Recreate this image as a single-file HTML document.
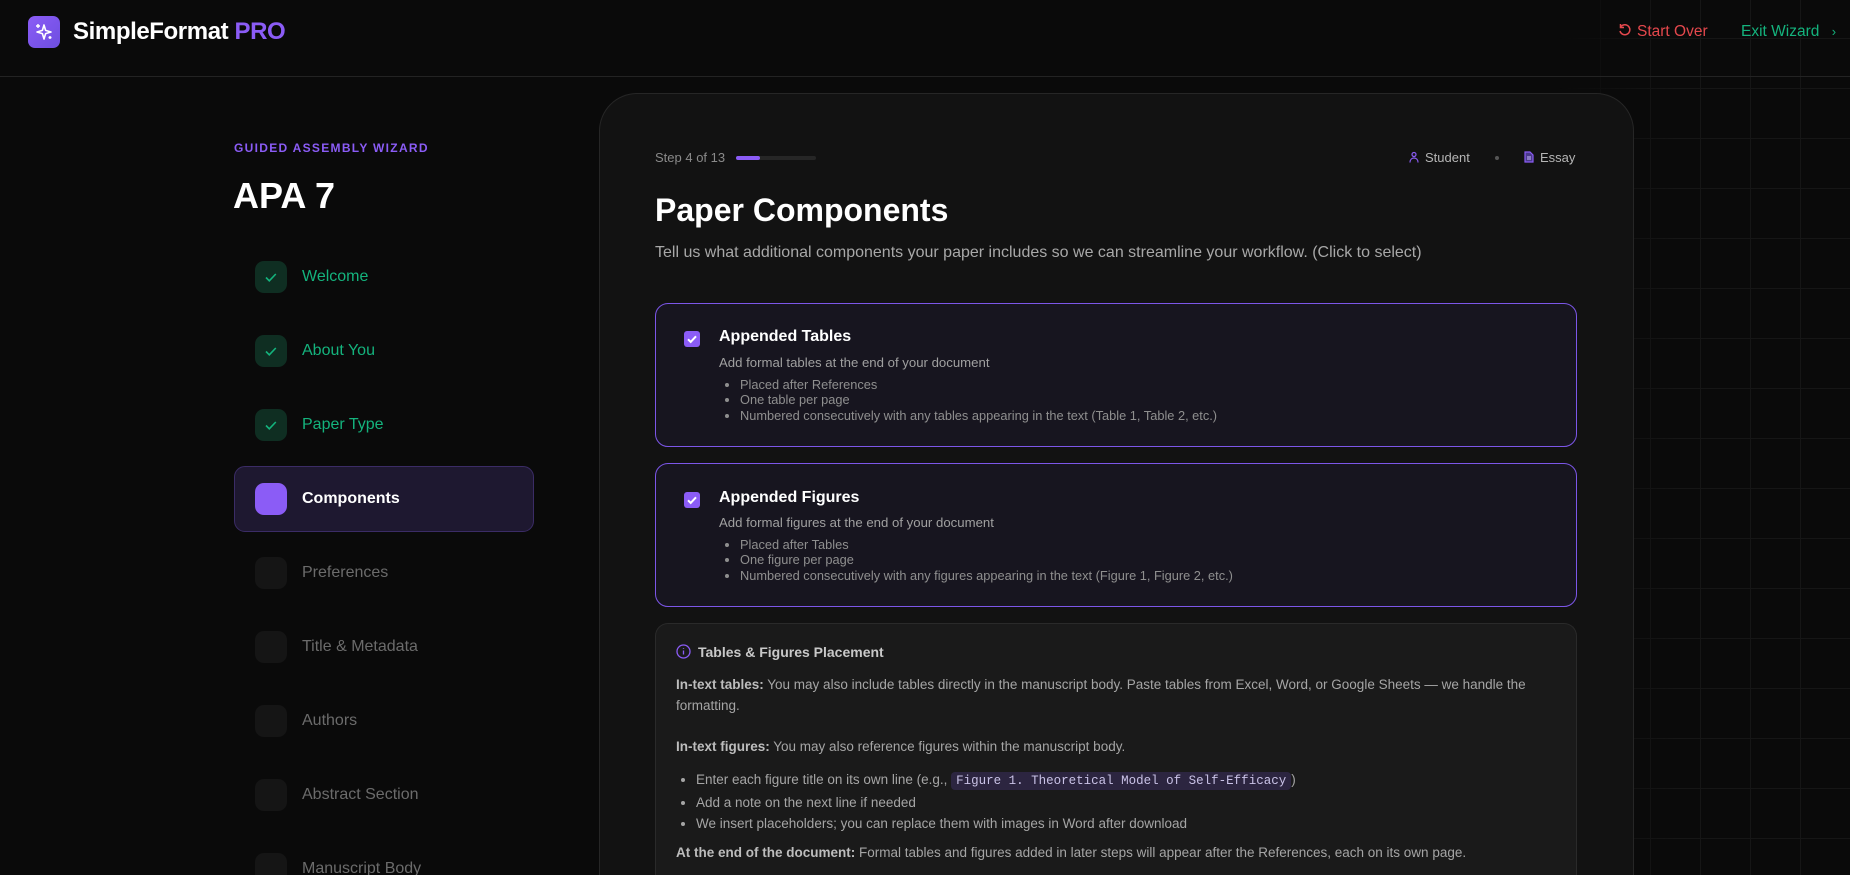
<!DOCTYPE html>
<html><head><meta charset="utf-8"><style>
*{box-sizing:border-box;margin:0;padding:0}
html,body{width:1850px;height:875px;overflow:hidden;background:#0a0a0a;font-family:"Liberation Sans",Arial,sans-serif;color:#fff}
body{position:relative}
.abs{position:absolute}
.grid{position:absolute;left:1560px;top:0;width:290px;height:875px;background-image:linear-gradient(#161616 1px,transparent 1px),linear-gradient(90deg,#161616 1px,transparent 1px);background-size:50px 50px;background-position:-10px -12px;-webkit-mask-image:linear-gradient(90deg,transparent,#000 40%);}
.hdr{position:absolute;left:0;top:0;width:1850px;height:77px;border-bottom:1px solid #232323}
.step{position:absolute;left:234px;width:300px;height:38px}
.step .ic{position:absolute;left:21px;top:17px;width:32px;height:32px;border-radius:9px;background:#151515}
.step .t{position:absolute;left:68px;top:24px;font-size:16px;color:#6b6b6b}
.step.done .ic{background:#0f2e22}
.step.done .t{color:#14b37d}
.card{position:absolute;left:655px;width:922px;border:1px solid #7c56e8;border-radius:13px;background:#17151f}
.card .cb{position:absolute;left:28px;width:16px;height:16px;border-radius:3px;background:#8b5cf6}
.card h3{position:absolute;left:63px;font-size:16px;font-weight:bold;color:#fff}
.card .d{position:absolute;left:63px;font-size:13.2px;color:#a0a0a0}
.card ul{position:absolute;left:84px;font-size:12.8px;line-height:15.3px;color:#8f8f8f;list-style:disc}
.info{position:absolute;left:655px;top:623px;width:922px;height:252px;border:1px solid #2a2a2a;border-bottom:none;border-radius:13px 13px 0 0;background:#1a1a1a;font-size:13.5px;color:#a5a5a5}
.info b{color:#bdbdbd}
.info .p{position:absolute;left:20px}
code{font-family:"Liberation Mono",monospace;font-size:12.5px;background:#2c2540;color:#c9c2e6;padding:2px 5px;border-radius:4px}
</style></head><body>
<div class="grid"></div>
<div class="hdr">
  <div class="abs" style="left:28px;top:16px;width:32px;height:32px;border-radius:7px;background:linear-gradient(135deg,#8b5cf6,#6d4ee0)">
    <svg width="32" height="32" viewBox="0 0 32 32"><path d="M16 9 L17.6 14.4 L23 16 L17.6 17.6 L16 23 L14.4 17.6 L9 16 L14.4 14.4Z" fill="none" stroke="#fff" stroke-width="1.6" stroke-linejoin="round"/><path d="M10 8v4M8 10h4M22 20v3M20.5 21.5h3" stroke="#fff" stroke-width="1.4"/></svg>
  </div>
  <div class="abs" style="left:73px;top:18px;font-size:24px;font-weight:bold;letter-spacing:-0.4px">SimpleFormat <span style="color:#8b5cf6">PRO</span></div>
  <div class="abs" style="left:1618px;top:23px;font-size:15.5px;color:#e5484d">
    <svg width="14" height="14" viewBox="0 0 14 14" style="vertical-align:-1px;margin-right:5px"><path d="M3 3.5A5 5 0 1 1 2 8" fill="none" stroke="#e5484d" stroke-width="1.5"/><path d="M2.5 1v3.5h3.5" fill="none" stroke="#e5484d" stroke-width="1.5"/></svg>Start Over</div>
  <div class="abs" style="left:1741px;top:23px;font-size:15.5px;color:#14b37d">Exit Wizard <span style="margin-left:8px;font-size:13px">›</span></div>
</div>

<div class="abs" style="left:234px;top:141px;font-size:12px;letter-spacing:1.3px;color:#8b5cf6;font-weight:bold">GUIDED ASSEMBLY WIZARD</div>
<div class="abs" style="left:233px;top:175px;font-size:36px;font-weight:bold">APA 7</div>

<div class="step done" style="top:244px"><div class="ic"><svg width="32" height="32"><path d="M11 16.5l3.3 3.3 6.5-6.8" fill="none" stroke="#14b37d" stroke-width="1.6"/></svg></div><div class="t">Welcome</div></div>
<div class="step done" style="top:318px"><div class="ic"><svg width="32" height="32"><path d="M11 16.5l3.3 3.3 6.5-6.8" fill="none" stroke="#14b37d" stroke-width="1.6"/></svg></div><div class="t">About You</div></div>
<div class="step done" style="top:392px"><div class="ic"><svg width="32" height="32"><path d="M11 16.5l3.3 3.3 6.5-6.8" fill="none" stroke="#14b37d" stroke-width="1.6"/></svg></div><div class="t">Paper Type</div></div>
<div class="step" style="top:466px;height:66px;background:#1e1830;border:1px solid #3b2c66;border-radius:11px"><div class="ic" style="left:20px;top:16px;background:#8b5cf6"></div><div class="t" style="top:23px;left:67px;color:#fff;font-weight:bold">Components</div></div>
<div class="step" style="top:540px"><div class="ic"></div><div class="t">Preferences</div></div>
<div class="step" style="top:614px"><div class="ic"></div><div class="t">Title &amp; Metadata</div></div>
<div class="step" style="top:688px"><div class="ic"></div><div class="t">Authors</div></div>
<div class="step" style="top:762px"><div class="ic"></div><div class="t">Abstract Section</div></div>
<div class="step" style="top:836px"><div class="ic"></div><div class="t">Manuscript Body</div></div>

<div class="abs" style="left:599px;top:93px;width:1035px;height:782px;border:1px solid #262626;border-bottom:none;border-radius:38px 38px 0 0;background:#121212"></div>

<div class="abs" style="left:655px;top:150px;font-size:13px;color:#8a8a8a">Step 4 of 13</div>
<div class="abs" style="left:736px;top:156px;width:80px;height:4px;border-radius:2px;background:#262626"><div style="width:24px;height:4px;border-radius:2px;background:#8b5cf6"></div></div>
<div class="abs" style="left:1409px;top:150px;font-size:13px;color:#b5b5b5">
  <svg width="10" height="12" viewBox="0 0 10 12" style="vertical-align:-1px;margin-right:6px"><circle cx="5" cy="3.5" r="2" fill="none" stroke="#8b5cf6" stroke-width="1.2"/><path d="M1 11.5c0-3 1.8-4.5 4-4.5s4 1.5 4 4.5" fill="none" stroke="#8b5cf6" stroke-width="1.2"/></svg>Student</div>
<div class="abs" style="left:1495px;top:156px;width:4px;height:4px;border-radius:2px;background:#555"></div>
<div class="abs" style="left:1524px;top:150px;font-size:13px;color:#b5b5b5">
  <svg width="10" height="12" viewBox="0 0 10 12" style="vertical-align:-1px;margin-right:6px"><path d="M1 1h5l3 3v7H1z" fill="#4a3a8a" stroke="#8b5cf6" stroke-width="1.2"/><path d="M3 6h4M3 8h4" stroke="#c9b8ff" stroke-width="1"/></svg>Essay</div>

<div class="abs" style="left:655px;top:192px;font-size:32px;font-weight:bold">Paper Components</div>
<div class="abs" style="left:655px;top:244px;font-size:16px;color:#a8a8a8">Tell us what additional components your paper includes so we can streamline your workflow. (Click to select)</div>

<div class="card" style="top:303px;height:144px">
  <div class="cb" style="top:27px"><svg width="16" height="16"><path d="M4 8.3l2.7 2.6L12 5.3" fill="none" stroke="#fff" stroke-width="2"/></svg></div>
  <h3 style="top:24px">Appended Tables</h3>
  <div class="d" style="top:51px">Add formal tables at the end of your document</div>
  <ul style="top:73px"><li>Placed after References</li><li>One table per page</li><li>Numbered consecutively with any tables appearing in the text (Table 1, Table 2, etc.)</li></ul>
</div>
<div class="card" style="top:463px;height:144px">
  <div class="cb" style="top:28px"><svg width="16" height="16"><path d="M4 8.3l2.7 2.6L12 5.3" fill="none" stroke="#fff" stroke-width="2"/></svg></div>
  <h3 style="top:25px">Appended Figures</h3>
  <div class="d" style="top:51px">Add formal figures at the end of your document</div>
  <ul style="top:73px"><li>Placed after Tables</li><li>One figure per page</li><li>Numbered consecutively with any figures appearing in the text (Figure 1, Figure 2, etc.)</li></ul>
</div>

<div class="info">
  <div class="p" style="top:20px;font-size:14px;font-weight:bold;color:#c8c8c8"><svg width="15" height="15" viewBox="0 0 15 15" style="vertical-align:-2px;margin-right:7px"><circle cx="7.5" cy="7.5" r="6.5" fill="none" stroke="#8b5cf6" stroke-width="1.3"/><path d="M7.5 6.5v4M7.5 4.2v.8" stroke="#8b5cf6" stroke-width="1.3"/></svg>Tables &amp; Figures Placement</div>
  <div class="p" style="top:50px;width:880px;line-height:21px"><b>In-text tables:</b> You may also include tables directly in the manuscript body. Paste tables from Excel, Word, or Google Sheets — we handle the formatting.</div>
  <div class="p" style="top:115px"><b>In-text figures:</b> You may also reference figures within the manuscript body.</div>
  <ul class="p" style="top:145px;left:40px;line-height:21px;list-style:disc">
    <li>Enter each figure title on its own line (e.g., <code>Figure 1. Theoretical Model of Self-Efficacy</code>)</li>
    <li>Add a note on the next line if needed</li>
    <li>We insert placeholders; you can replace them with images in Word after download</li>
  </ul>
  <div class="p" style="top:221px"><b>At the end of the document:</b> Formal tables and figures added in later steps will appear after the References, each on its own page.</div>
</div>
</body></html>
